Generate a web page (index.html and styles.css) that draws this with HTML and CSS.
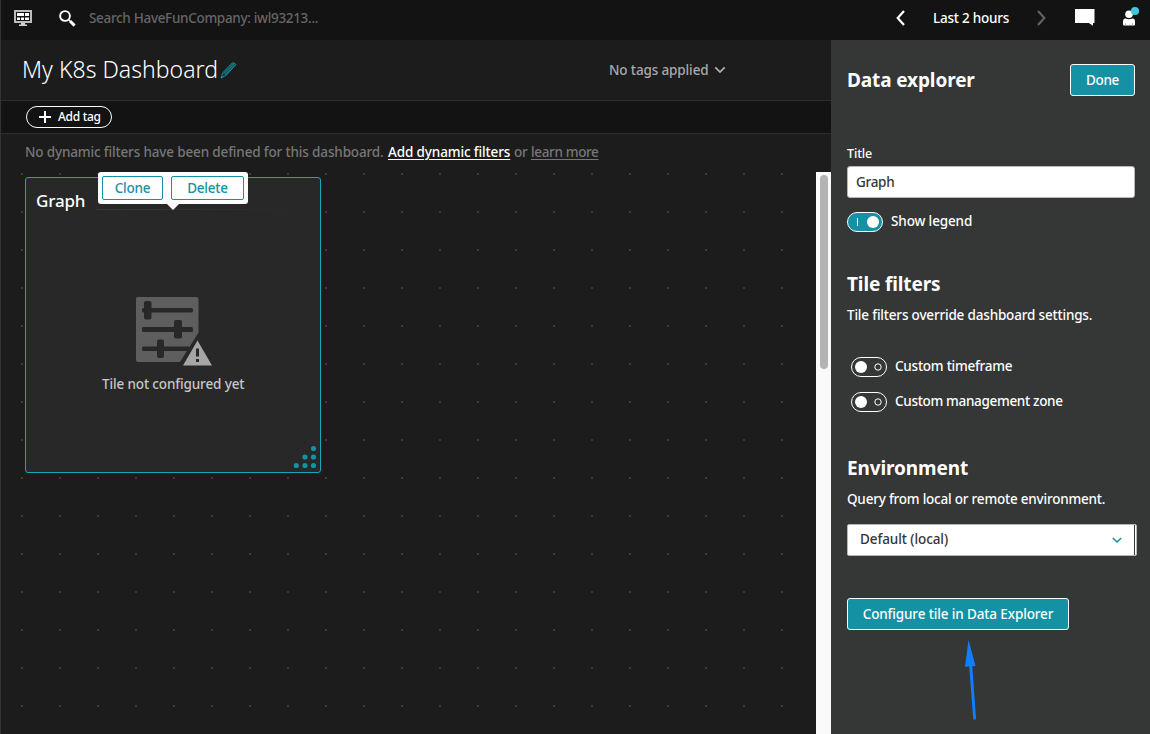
FILE: index.html
```html
<!DOCTYPE html>
<html lang="en">
<head>
<meta charset="utf-8">
<title>My K8s Dashboard</title>
<link rel="stylesheet" href="styles.css">
</head>
<body>
<div class="app">
  <header class="topbar">
    <svg class="icon-dash" width="18" height="16" viewBox="0 0 18 16"><path fill="#bdbdbd" fill-rule="evenodd" d="M0 0h18v13H0zM2 2v9h14V2z"/><path fill="#fff" d="M3 3h7v3H3zM11 3h4v3h-4zM3 7.500h3V10H3zM7 7.500h3V10H7zM11 7.500h4V10h-4z"/><path fill="#cfcfcf" d="M7 13h4v1.500h2V16H5v-1.500h2z"/></svg>
    <svg class="icon-search" width="17" height="17" viewBox="0 0 17 17" fill="none" stroke="#fff"><circle cx="6" cy="6" r="4.900" stroke-width="1.900"/><path d="M9.500 9.500l1.700 1.700" stroke-width="1.500"/><path d="M11 11l4.600 4.600" stroke-width="3"/></svg>
    <span class="search">Search HaveFunCompany: iwl93213...</span>
    <div class="timeframe">
      <svg width="9" height="16" viewBox="0 0 9 16" fill="none" stroke="#fff" stroke-width="2.200"><path d="M8 1L1.700 8 8 15"/></svg>
      <span class="time-label">Last 2 hours</span>
      <svg width="9" height="16" viewBox="0 0 9 16" fill="none" stroke="#626262" stroke-width="2.200"><path d="M1 1l6.300 7L1 15"/></svg>
    </div>
    <svg class="icon-chat" width="20" height="17" viewBox="0 0 20 17"><path fill="#fff" d="M0 0h19.500v14H18v2.700L13.800 14H0z"/></svg>
    <svg class="icon-user" width="17" height="20" viewBox="0 0 17 20"><circle cx="6" cy="8.200" r="3.800" fill="#fff"/><path fill="#fff" d="M0 15.500q0-3 2.500-3 3.500 1.500 7 0 2.500 0 2.500 3v3q0 1-1 1H1q-1 0-1-1z"/><path d="M2.500 17v2.500M9.500 17v2.500" stroke="#999" stroke-width=".7"/><circle cx="12" cy="5" r="4.100" fill="#3ec8d8"/></svg>
  </header>
  <div class="body">
    <main class="dashboard">
      <div class="titlebar">
        <h1>My K8s Dashboard</h1>
        <svg class="pencil" width="17" height="18" viewBox="0 0 17 18" fill="none" stroke="#1491a3"><path stroke-width="1" d="M1 17l2-5.500L12.800 1.500 16 3.500 6 14.500z"/><path stroke-width=".9" d="M3.300 12.500L13.500 2M5 14L15 3.500M4.200 13.300L14.300 2.700M1 17l3-2"/></svg>
        <span class="tags">No tags applied</span>
        <svg class="tags-chevron" width="12" height="8" viewBox="0 0 12 8" fill="none" stroke="#b0b0b0" stroke-width="1.700"><path d="M1.300 1.300L6 6l4.700-4.700"/></svg>
      </div>
      <div class="tagbar">
        <button class="addtag"><svg width="12" height="12" viewBox="0 0 12 12" stroke="#fff" stroke-width="2"><path d="M6 0v12M0 6h12"/></svg><span>Add tag</span></button>
      </div>
      <div class="filters"><span class="f1">No dynamic filters have been defined for this dashboard.</span><a class="f2">Add dynamic filters</a><span class="f3">or</span><a class="f4">learn more</a></div>
      <div class="canvas">
        <section class="tile">
          <h2>Graph</h2>
          <div class="rule"></div>
          <svg class="tile-icon" width="76" height="69" viewBox="0 0 76 69">
            <path fill="#5e5e5e" d="M1.500 0h59Q62.500 0 62.500 2V36.500L44 65H2Q0 65 0 63V2Q0 0 1.500 0z"/>
            <g fill="#282828"><rect x="6" y="11" width="51" height="4.500" rx="1.500"/><rect x="8" y="4" width="7.500" height="18.500" rx="2"/><rect x="6" y="30" width="51" height="5" rx="1.500"/><rect x="38" y="23" width="8" height="18.500" rx="2"/><rect x="6" y="49.500" width="48" height="4.500" rx="1.500"/><rect x="21" y="42.500" width="7" height="18.500" rx="2"/><path d="M62.500 35.500L42.500 68V69H76V60z"/></g>
            <path fill="#a6a6a6" d="M61.500 43.500L76 68.500H47z"/><path fill="#282828" d="M60 51.500h3v8h-3zM60 62h3v3h-3z"/>
          </svg>
          <p class="unconfigured">Tile not configured yet</p>
          <svg class="resize" width="24" height="24" viewBox="0 0 24 24" fill="#1491a3"><circle cx="20.500" cy="3.500" r="2.600"/><circle cx="12" cy="12" r="2.600"/><circle cx="20.500" cy="12" r="2.600"/><circle cx="3.300" cy="20.500" r="2.600"/><circle cx="12" cy="20.500" r="2.600"/><circle cx="20.500" cy="20.500" r="2.600"/></svg>
          <div class="popover"><button class="clone"><span>Clone</span></button><button class="delete"><span>Delete</span></button></div>
        </section>
        <div class="scrollbar"><div class="thumb"></div></div>
      </div>
    </main>
    <aside class="panel">
      <div class="panel-head"><h2 class="h-data">Data explorer</h2><button class="primary done"><span>Done</span></button></div>
      <label class="field-label">Title</label>
      <div class="input"><span>Graph</span></div>
      <div class="switch-row legend"><svg width="36" height="20" viewBox="0 0 36 20"><rect x=".5" y=".5" width="35" height="19" rx="9.500" fill="#1491a3" stroke="#fff"/><path d="M10.500 6v8" stroke="#fff"/><circle cx="26" cy="10" r="6" fill="#fff"/></svg><span>Show legend</span></div>
      <h2 class="h-filters">Tile filters</h2>
      <p class="desc p-filters">Tile filters override dashboard settings.</p>
      <div class="switch-row custom-time"><svg width="36" height="20" viewBox="0 0 36 20" fill="none" stroke="#fff"><rect x=".5" y=".5" width="35" height="19" rx="9.500"/><circle cx="10" cy="10" r="6" fill="#fff" stroke="none"/><circle cx="27" cy="10" r="3.200"/></svg><span>Custom timeframe</span></div>
      <div class="switch-row custom-zone"><svg width="36" height="20" viewBox="0 0 36 20" fill="none" stroke="#fff"><rect x=".5" y=".5" width="35" height="19" rx="9.500"/><circle cx="10" cy="10" r="6" fill="#fff" stroke="none"/><circle cx="27" cy="10" r="3.200"/></svg><span>Custom management zone</span></div>
      <h2 class="h-env">Environment</h2>
      <p class="desc p-env">Query from local or remote environment.</p>
      <div class="select"><span>Default (local)</span><svg width="10" height="7" viewBox="0 0 10 7" fill="none" stroke="#1491a3" stroke-width="1.600"><path d="M.8 1L5 5l4.200-4"/></svg></div>
      <button class="primary configure"><span>Configure tile in Data Explorer</span></button>
      <svg class="arrow" width="12" height="82" viewBox="0 0 12 82" fill="#127eff"><path d="M3.500 0L10.500 26 7.300 26.200 11 78.500Q10.500 80.500 8.300 79.500L4.200 26.400 0 26.700z"/></svg>
    </aside>
  </div>
</div>
</body>
</html>
```
FILE: styles.css
```css
* { box-sizing: border-box; }
body { margin: 0; background: #1c1c1c; color: #fff; font: 500 13.5px/20px "Noto Sans", sans-serif; letter-spacing: -.13px; }
h1, h2, p { margin: 0; }
button { font: inherit; letter-spacing: inherit; color: inherit; padding: 0; margin: 0; background: none; border: 1px solid #fff; }
svg { display: block; flex: none; }
span, a, h1, h2, p, label { white-space: nowrap; }
.app { width: 1150px; height: 734px; display: flex; flex-direction: column; overflow: hidden; border-left: 1px solid #333; }
.topbar { height: 40px; background: #131313; display: flex; align-items: flex-start; flex: none; }
.icon-dash { margin: 10px 0 0 13px; }
.icon-search { margin: 10px 0 0 27px; }
.search { margin: 8px 0 0 13px; width: 234px; color: #666; letter-spacing: -.32px; }
.timeframe { display: flex; align-items: center; margin: 8px 0 0 573px; height: 20px; }
.time-label { width: 76px; margin: 0 28px 0 28px; letter-spacing: -.24px; }
.icon-chat { margin: 9px 0 0 29px; }
.icon-user { margin: 6px 0 0 28px; }
.body { display: flex; flex: 1; min-height: 0; }
.dashboard { width: 830px; display: flex; flex-direction: column; }
.titlebar { height: 61px; border-bottom: 1px solid #2d2d2d; display: flex; align-items: flex-start; flex: none; }
.titlebar h1 { font-weight: 350; font-size: 23px; line-height: 30px; width: 196px; margin: 14px 0 0 21px; letter-spacing: .03px; }
.pencil { margin: 21px 0 0 2px; }
.tags { width: 99px; margin: 20px 0 0 372px; color: #a9a9a9; }
.tags-chevron { margin: 26px 0 0 6px; }
.tagbar { height: 33px; background: #131313; border-bottom: 1px solid #2d2d2d; padding: 5px 0 0 25px; flex: none; }
.addtag { display: flex; align-items: center; gap: 7px; width: 86px; height: 22px; padding-left: 12px; border-radius: 11px; font-size: 12px; letter-spacing: -.3px; }
.filters { height: 38px; padding: 8px 0 0 24px; color: #777; display: flex; flex: none; }
.filters a { text-decoration: underline; text-underline-offset: 2px; }
.f1 { width: 363px; letter-spacing: -.15px; }
.f2 { width: 122px; color: #fff; }
.f3 { width: 21px; padding-left: 4px; }
.f4 { letter-spacing: -.35px; }
.canvas { flex: 1; display: flex; justify-content: space-between; background: conic-gradient(from 270deg at 2px 2px, #3a3a3a 90deg, transparent 0) 20px 1px / 38px 38px; }
.tile { position: relative; width: 296px; height: 296px; margin: 5px 0 0 24px; border: 1px solid #16a8b8; border-radius: 3px; background: #282828; display: flex; flex-direction: column; }
.tile h2 { font-size: 17px; line-height: 24px; font-weight: 500; margin: 11px 0 0 10px; width: 50px; letter-spacing: -.15px; }
.rule { height: 1px; margin: -4px 0 0 70px; width: 200px; background: linear-gradient(90deg, #393939, #282828); }
.tile-icon { margin: 87px 0 0 110px; }
.unconfigured { color: #c6c6c6; margin: 8px 0 0 76px; }
.resize { position: absolute; right: 3px; bottom: 3px; }
.popover { position: absolute; left: 72px; top: -6px; width: 150px; height: 32px; background: #fff; border-radius: 3px; padding: 4px; display: flex; gap: 8px; }
.popover::after { content: ""; position: absolute; left: 69px; top: 32px; border: 6px solid transparent; border-top-color: #fff; border-bottom: 0; }
.popover button { border-color: #1491a3; color: #1491a3; border-radius: 2px; height: 24px; line-height: 22px; letter-spacing: -.2px; }
.clone { width: 61px; }
.delete { width: 73px; }
.scrollbar { width: 15px; background: #fafafa; padding: 3px 0 0 4px; }
.thumb { width: 8px; height: 194px; background: #b4b4b4; border-radius: 4px; }
.panel { flex: 1; background: #353636; padding-left: 16px; display: flex; flex-direction: column; align-items: flex-start; }
.panel h2 { font-size: 19px; line-height: 26px; font-weight: 700; letter-spacing: -.12px; }
.panel-head { width: 288px; display: flex; align-items: center; justify-content: space-between; margin-top: 24px; height: 32px; }
.primary { background: #1491a3; border-radius: 3px; height: 32px; line-height: 30px; }
.done { width: 65px; letter-spacing: -.3px; }
.field-label { margin-top: 49px; font-size: 12.500px; line-height: 18px; }
.input { width: 288px; height: 32px; margin-top: 3px; background: #fff; color: #353535; border: 1px solid #b7b7b7; border-radius: 3px; padding: 5px 8px; letter-spacing: -.3px; }
.switch-row { display: flex; align-items: center; gap: 8px; height: 20px; }
.switch-row span { position: relative; top: -1px; }
.legend { margin-top: 14px; }
.h-filters { margin-top: 39px; }
.p-filters { margin-top: 8px; letter-spacing: -.18px; }
.custom-time { margin: 32px 0 0 4px; letter-spacing: -.24px; }
.custom-zone { margin: 15px 0 0 4px; letter-spacing: -.32px; }
.h-env { margin-top: 43px; }
.p-env { margin-top: 8px; letter-spacing: -.21px; }
.select { width: 290px; height: 32px; margin-top: 15px; background: linear-gradient(#353636, #353636) 287px 1px / 1px 30px no-repeat, #fff; background-origin: border-box; color: #353535; border: 1px solid #b7b7b7; border-radius: 2px; padding: 0 14px 0 12px; display: flex; align-items: center; justify-content: space-between; letter-spacing: -.08px; }
.select span { margin-top: -2px; }
.configure { width: 222px; margin-top: 42px; }
.arrow { margin: 10px 0 0 118px; }
```
